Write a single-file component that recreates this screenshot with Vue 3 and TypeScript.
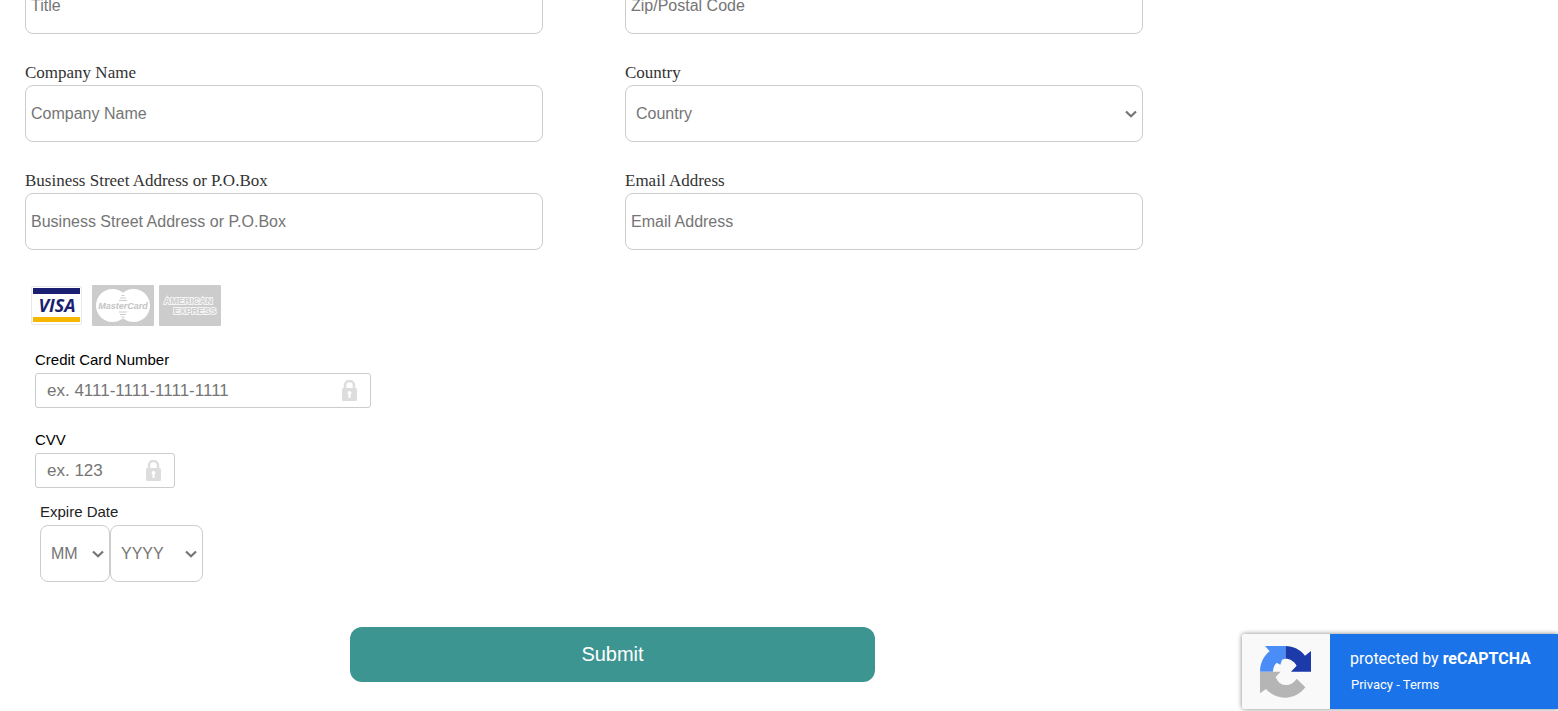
<script setup lang="ts">
import { reactive } from 'vue'

interface Field {
  id: string
  label: string
  options?: string[]
}

const fields: Field[] = [
  { id: 'title', label: 'Title' },
  { id: 'zip', label: 'Zip/Postal Code' },
  { id: 'company', label: 'Company Name' },
  { id: 'country', label: 'Country', options: ['Canada', 'United Kingdom', 'United States'] },
  { id: 'street', label: 'Business Street Address or P.O.Box' },
  { id: 'email', label: 'Email Address' },
]

const values = reactive<Record<string, string>>({
  title: '',
  zip: '',
  company: '',
  country: '',
  street: '',
  email: '',
  card: '',
  cvv: '',
  month: '',
  year: '',
})

const months: string[] = Array.from({ length: 12 }, (_, i) => String(i + 1).padStart(2, '0'))
const years: string[] = Array.from({ length: 10 }, (_, i) => String(2024 + i))
</script>

<template>
  <form class="form" @submit.prevent>
    <div class="body">
      <div class="grid">
        <div v-for="f in fields" :key="f.id" class="field">
          <label class="label" :for="f.id">{{ f.label }}</label>
          <select v-if="f.options" :id="f.id" v-model="values[f.id]" class="control">
            <option value="">{{ f.label }}</option>
            <option v-for="o in f.options" :key="o" :value="o">{{ o }}</option>
          </select>
          <input v-else :id="f.id" v-model="values[f.id]" class="control" type="text" :placeholder="f.label" />
        </div>
      </div>

      <div class="cards">
        <svg class="card" width="62" height="41" viewBox="0 0 62 41" role="img" aria-label="Visa">
          <rect x="6.500" y="1.500" width="50" height="38" rx="1.500" fill="#fff" stroke="#e8e8e8" />
          <rect x="8" y="3" width="47" height="6" fill="#1a1f71" />
          <rect x="8" y="32" width="47" height="5" fill="#f7b600" />
          <text x="32" y="27" class="visa">VISA</text>
        </svg>
        <svg class="card" width="62" height="41" viewBox="0 0 62 41" role="img" aria-label="MasterCard">
          <rect width="62" height="41" rx="1" fill="#ccc" />
          <circle cx="20.500" cy="20.500" r="16.500" fill="#fff" />
          <circle cx="41.500" cy="20.500" r="16.500" fill="#fff" />
          <path d="M29.500 10.500h3M28 13h6M27 15.500h8M27 27h8M28 29.500h6M29.500 32h3" stroke="#ccc" stroke-width="1.200" />
          <text x="31" y="24" class="master">MasterCard</text>
        </svg>
        <svg class="card" width="62" height="41" viewBox="0 0 62 41" role="img" aria-label="American Express">
          <rect width="62" height="41" rx="1" fill="#ccc" />
          <text x="5" y="19" class="amex">AMERICAN</text>
          <text x="57" y="29" class="amex end">EXPRESS</text>
        </svg>
      </div>

      <div class="secure number">
        <label class="small-label" for="card">Credit Card Number</label>
        <div class="secure-box">
          <input id="card" v-model="values.card" type="text" placeholder="ex. 4111-1111-1111-1111" />
          <svg class="lock" width="15" height="21" viewBox="0 0 15 21" aria-hidden="true">
            <path d="M3 9V5.500a4.500 4.500 0 0 1 9 0V9" fill="none" stroke="#ddd" stroke-width="2.600" />
            <rect y="8" width="15" height="13" rx="1.500" fill="#ddd" />
            <path d="M7.500 11a1.900 1.900 0 0 0-1 3.500V18h2v-3.500a1.900 1.900 0 0 0-1-3.500z" fill="#fff" />
          </svg>
        </div>
      </div>

      <div class="secure cvv">
        <label class="small-label" for="cvv">CVV</label>
        <div class="secure-box">
          <input id="cvv" v-model="values.cvv" type="text" placeholder="ex. 123" />
          <svg class="lock" width="15" height="21" viewBox="0 0 15 21" aria-hidden="true">
            <path d="M3 9V5.500a4.500 4.500 0 0 1 9 0V9" fill="none" stroke="#ddd" stroke-width="2.600" />
            <rect y="8" width="15" height="13" rx="1.500" fill="#ddd" />
            <path d="M7.500 11a1.900 1.900 0 0 0-1 3.500V18h2v-3.500a1.900 1.900 0 0 0-1-3.500z" fill="#fff" />
          </svg>
        </div>
      </div>

      <div class="expire">
        <label class="small-label dim" for="month">Expire Date</label>
        <div class="dates">
          <select id="month" v-model="values.month" class="control month">
            <option value="">MM</option>
            <option v-for="m in months" :key="m" :value="m">{{ m }}</option>
          </select>
          <select id="year" v-model="values.year" class="control year" aria-label="Expire year">
            <option value="">YYYY</option>
            <option v-for="y in years" :key="y" :value="y">{{ y }}</option>
          </select>
        </div>
      </div>
    </div>

    <button class="submit" type="submit">Submit</button>
  </form>

  <aside class="captcha">
    <div class="captcha-logo">
      <svg width="52" height="52" viewBox="15 18 156 156" aria-hidden="true">
        <path fill="#1c3aa9" d="M91 18C115 18 136 29 150 47L168 33V95H108L125 77C118 64 106 56 91 56Z" />
        <path fill="#4a8df6" d="M91 18H30L44 34C26 48 15 70 15 95H54C54 83 58 75 65 68L76 74L81 59L91 56Z" />
        <path fill="#b5b5b5" d="M15 95H77L62 111C68 126 78 135 92 135C106 135 117 128 125 116L151 142C137 161 116 173 91 173C67 173 47 163 33 147L15 160Z" />
      </svg>
    </div>
    <div class="captcha-text">
      <div class="protected">protected by <strong>reCAPTCHA</strong></div>
      <div class="links"><a href="#privacy">Privacy</a> - <a href="#terms">Terms</a></div>
    </div>
  </aside>
</template>

<style scoped>
.form {
  max-width: 1225px;
  margin-top: -44px;
  font-family: "Liberation Sans", Arial, sans-serif;
}

.body {
  padding: 0 82px 0 25px;
}

.grid {
  display: grid;
  grid-template-columns: 1fr 1fr;
  gap: 30px 82px;
}

.field {
  display: flex;
  flex-direction: column;
}

.label {
  padding-bottom: 4px;
  color: #333;
  font: 17px/17px "Liberation Serif", "Times New Roman", serif;
}

.control {
  box-sizing: border-box;
  width: 100%;
  height: 57px;
  padding: 0 5px;
  border: 1px solid #ccc;
  border-radius: 8px;
  background: #fff;
  color: #757575;
  font: 16px "Liberation Sans", Arial, sans-serif;
}

select.control {
  padding: 0 20px 0 10px;
  appearance: none;
  background: #fff url("data:image/svg+xml,%3Csvg xmlns='http://www.w3.org/2000/svg' width='12' height='8' viewBox='0 0 12 8'%3E%3Cpath d='M1 1.500L6 6.300L11 1.500' fill='none' stroke='%23757575' stroke-width='2.200'/%3E%3C/svg%3E") no-repeat right 5px center;
}

.control::placeholder,
.secure-box input::placeholder {
  color: #757575;
}

.cards {
  display: flex;
  gap: 5px;
  margin-top: 35px;
}

.card {
  display: block;
}

.visa {
  fill: #1a1f71;
  font: italic 700 18px "Open Sans", sans-serif;
  text-anchor: middle;
}

.master {
  fill: #c4c4c4;
  stroke: #fff;
  stroke-width: 2px;
  paint-order: stroke;
  font: italic 700 9px "Liberation Sans", Arial, sans-serif;
  text-anchor: middle;
}

.amex {
  fill: #ccc;
  stroke: #f4f4f4;
  stroke-width: 2px;
  paint-order: stroke;
  font: 700 9px "Liberation Sans", Arial, sans-serif;
}

.end {
  text-anchor: end;
}

.secure {
  margin-left: 10px;
}

.number {
  max-width: 336px;
  margin-top: 25px;
}

.cvv {
  max-width: 140px;
  margin-top: 23px;
}

.small-label {
  display: block;
  margin-bottom: 4px;
  color: #000;
  font-size: 15px;
  line-height: 18px;
}

.dim {
  color: #222;
}

.secure-box {
  display: flex;
  align-items: center;
  box-sizing: border-box;
  height: 35px;
  padding: 0 13px 0 11px;
  border: 1px solid #ccc;
  border-radius: 3px;
}

.secure-box input {
  flex: 1;
  min-width: 0;
  padding: 0;
  border: 0;
  outline: 0;
  background: none;
  font: 17px "Liberation Sans", Arial, sans-serif;
}

.lock {
  flex: none;
}

.expire {
  margin: 15px 0 0 15px;
}

.dates {
  display: flex;
}

.dates .month {
  width: 70px;
}

.dates .year {
  width: 93px;
}

.submit {
  display: block;
  width: 100%;
  max-width: 525px;
  height: 55px;
  margin: 45px auto 0;
  border: 0;
  border-radius: 12px;
  background: #3d9591;
  color: #fff;
  font: 20px "Liberation Sans", Arial, sans-serif;
}

.captcha {
  position: fixed;
  right: 0;
  bottom: 2px;
  display: flex;
  border-radius: 3px 0 0 3px;
  box-shadow: 0 0 5px gray;
  font-family: Roboto, sans-serif;
  color: #fff;
}

.captcha-logo {
  display: flex;
  align-items: center;
  justify-content: center;
  width: 88px;
  height: 75px;
  border-radius: 3px 0 0 3px;
  background: #f9f9f9;
}

.captcha-text {
  box-sizing: border-box;
  width: 228px;
  padding: 15px 0 0 20px;
  background: #1a73e8;
}

.protected {
  font-size: 16px;
  line-height: 20px;
}

.protected strong {
  font-weight: 700;
}

.links {
  padding: 8px 0 0 1px;
  font-size: 13px;
  line-height: 16px;
}

.links a {
  color: inherit;
  text-decoration: none;
}
</style>

<style>
body {
  margin: 0;
  background: #fff;
}

#app {
  display: flow-root;
}
</style>
